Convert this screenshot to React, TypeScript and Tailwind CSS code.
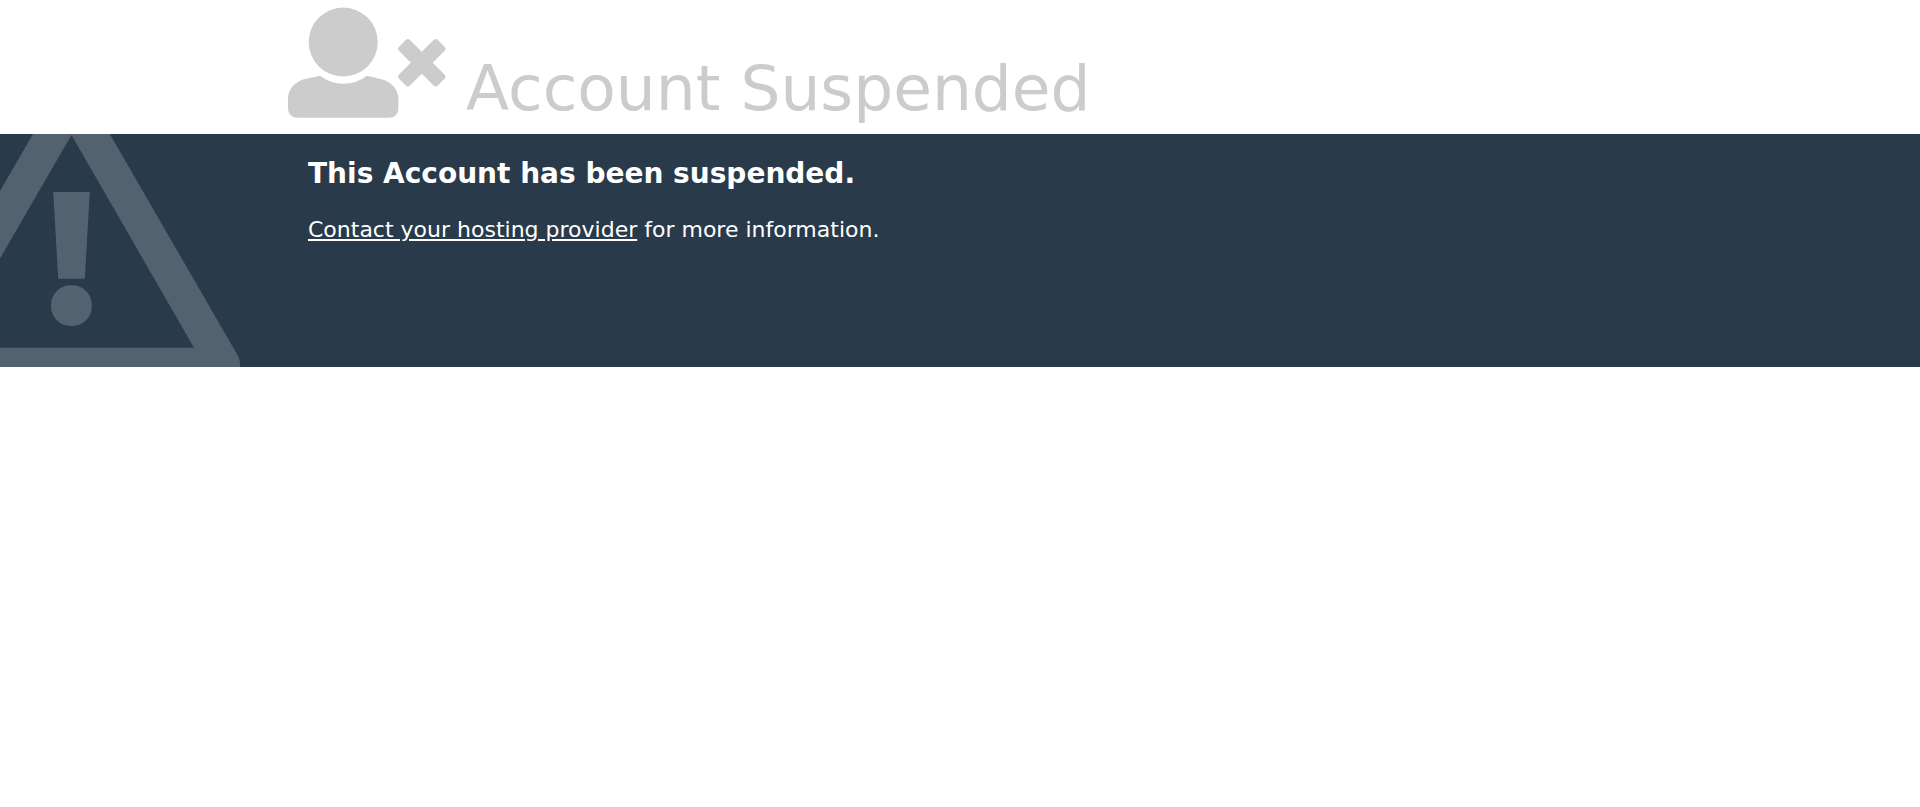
function UserTimesIcon() {
  return (
    <svg
      width="158"
      height="120"
      viewBox="0 0 158 120"
      fill="currentColor"
      className="shrink-0"
      aria-hidden="true"
    >
      {/* head and shoulders */}
      <circle cx="55.2" cy="42" r="34.5" />
      <path d="M32.2 75.7 Q42.5 83.7 55.3 83.7 Q68.5 83.7 79 75.7 L93.5 79.2 C103 81.5 110.4 89 110.4 99 V107.7 Q110.4 117.8 100.4 117.8 H10 Q0 117.8 0 107.7 V99 C0 89 7.5 81.2 17 79 Z" />

      {/* cross */}
      <g transform="translate(133.8 62.8)">
        <rect x="-27.4" y="-7.7" width="54.8" height="15.4" rx="3" transform="rotate(45)" />
        <rect x="-27.4" y="-7.7" width="54.8" height="15.4" rx="3" transform="rotate(-45)" />
      </g>
    </svg>
  );
}

function WarningIcon() {
  return (
    <svg
      width="240"
      height="233"
      viewBox="0 0 240 233"
      fill="currentColor"
      className="block"
      aria-hidden="true"
    >
      {/* triangle, cropped by the band on the left, top and bottom */}
      <path
        fillRule="evenodd"
        d="M33 0 H109.8 L237.5 221 Q240 225.5 240 229 V233 H0 V213.7 H194 L71.5 1 L0 124.5 V57 Z"
      />
      {/* exclamation mark */}
      <path d="M53.2 58 H89.8 L84.8 144.7 H58.2 Z" />
      <rect x="51" y="151.2" width="40.8" height="40.8" rx="19.5" />
    </svg>
  );
}

export default function App() {
  return (
    <div className="min-h-screen bg-white font-['DejaVu_Sans',sans-serif]">
      <header className="flex items-end gap-5 px-[15%] pb-3.5 text-[#cccccc]">
        <UserTimesIcon />
        <h1 className="text-[63px] leading-none whitespace-nowrap">Account Suspended</h1>
      </header>

      <section className="flex bg-[#293a4a] text-white">
        <div className="w-[15%] shrink-0 text-[#54616e]">
          <WarningIcon />
        </div>

        <div className="flex flex-col gap-6 px-5 pt-6">
          <h2 className="text-[28px] leading-8 font-bold">This Account has been suspended.</h2>
          <p className="text-[22px] leading-8">
            <a href="#" className="underline">
              Contact your hosting provider
            </a>{" "}
            for more information.
          </p>
        </div>
      </section>
    </div>
  );
}
